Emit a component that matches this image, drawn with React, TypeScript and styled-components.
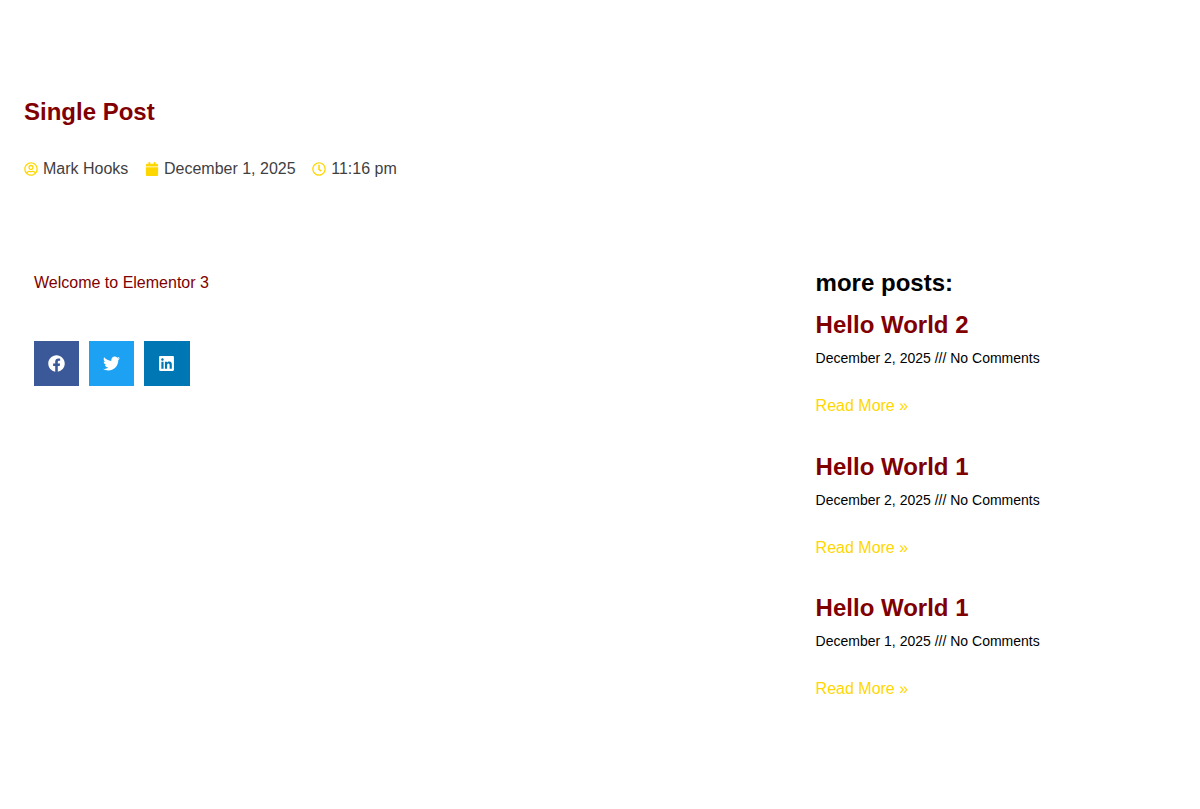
import styled, { createGlobalStyle } from "styled-components";
import {
  FaCalendar,
  FaFacebook,
  FaLinkedin,
  FaRegClock,
  FaRegUserCircle,
  FaTwitter,
} from "react-icons/fa";

const GlobalStyle = createGlobalStyle`
  html, body {
    margin: 0;
    padding: 0;
    background: #fff;
    font-family: "Liberation Sans", Arial, sans-serif;
  }
`;

const Page = styled.div`
  width: 1200px;
  height: 809px;
  overflow: hidden;
  box-sizing: border-box;
  padding: 97px 24px 0;
`;

const PageTitle = styled.h1`
  margin: 0;
  font-size: 24px;
  line-height: 29px;
  font-weight: 700;
  color: #800000;
`;

const MetaRow = styled.ul`
  list-style: none;
  margin: 31px 0 0;
  padding: 0;
  display: flex;
  gap: 16.6px;
  font-size: 16px;
  line-height: 24px;
  color: #3f3f3f;
`;

const MetaItem = styled.li`
  display: flex;
  align-items: center;
  gap: 5px;
  svg {
    width: 14px;
    height: 14px;
    color: #ffd700;
  }
`;

const Columns = styled.div`
  display: flex;
  justify-content: space-between;
  margin-top: 87px;
`;

const Article = styled.div`
  padding: 3px 0 0 10px;
`;

const Welcome = styled.p`
  margin: 0;
  font-size: 16px;
  line-height: 24px;
  color: #800000;
`;

const ShareRow = styled.div`
  display: flex;
  gap: 10px;
  margin-top: 46px;
`;

const ShareButton = styled.a<{ $bg: string }>`
  width: 45.2px;
  height: 45px;
  display: flex;
  align-items: center;
  justify-content: center;
  background: ${(p) => p.$bg};
  color: #fff;
  svg {
    width: 17px;
    height: 17px;
  }
`;

const Sidebar = styled.aside`
  width: 360.4px;
`;

const SidebarTitle = styled.h2`
  margin: 0;
  font-size: 24px;
  line-height: 29px;
  font-weight: 700;
  color: #000;
`;

const Post = styled.article`
  margin-top: 13.4px;
  height: 128.4px;
  & + & {
    margin-top: 13px;
  }
`;

const PostTitle = styled.h3`
  margin: 0;
  font-size: 24px;
  line-height: 30px;
  font-weight: 700;
  color: #800000;
`;

const PostMeta = styled.div`
  margin-top: 8px;
  font-size: 14px;
  line-height: 21px;
  color: #000;
`;

const ReadMore = styled.a`
  display: block;
  margin-top: 26px;
  font-size: 16px;
  line-height: 22px;
  color: #ffd700;
`;

const posts = [
  { title: "Hello World 2", date: "December 2, 2025" },
  { title: "Hello World 1", date: "December 2, 2025" },
  { title: "Hello World 1", date: "December 1, 2025" },
];

const App = () => {
  return (
    <Page>
      <GlobalStyle />
      <PageTitle>Single Post</PageTitle>
      <MetaRow>
        <MetaItem>
          <FaRegUserCircle />
          Mark Hooks
        </MetaItem>
        <MetaItem>
          <FaCalendar />
          December 1, 2025
        </MetaItem>
        <MetaItem>
          <FaRegClock />
          11:16 pm
        </MetaItem>
      </MetaRow>
      <Columns>
        <Article>
          <Welcome>Welcome to Elementor 3</Welcome>
          <ShareRow>
            <ShareButton $bg="#3b5998">
              <FaFacebook />
            </ShareButton>
            <ShareButton $bg="#1da1f2">
              <FaTwitter />
            </ShareButton>
            <ShareButton $bg="#0077b5">
              <FaLinkedin />
            </ShareButton>
          </ShareRow>
        </Article>
        <Sidebar>
          <SidebarTitle>more posts:</SidebarTitle>
          {posts.map((post, i) => (
            <Post key={i}>
              <PostTitle>{post.title}</PostTitle>
              <PostMeta>{post.date} /// No Comments</PostMeta>
              <ReadMore>Read More »</ReadMore>
            </Post>
          ))}
        </Sidebar>
      </Columns>
    </Page>
  );
};

export default App;
